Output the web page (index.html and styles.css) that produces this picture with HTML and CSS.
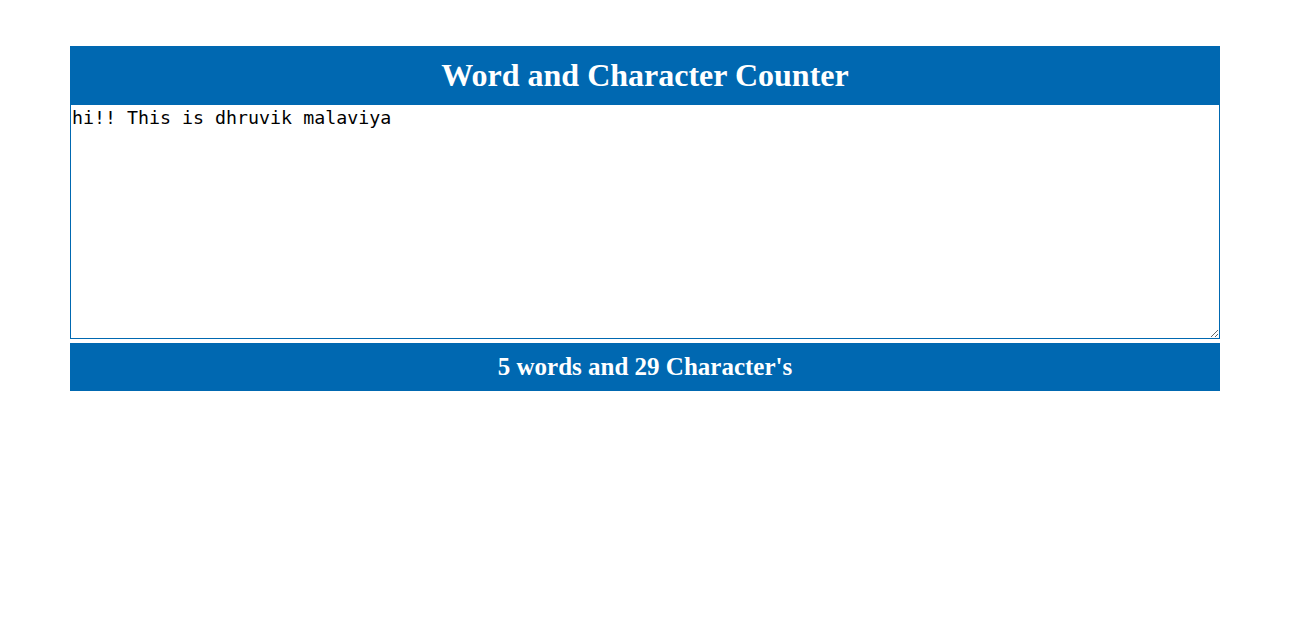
FILE: index.html
```html
<!DOCTYPE html>
<html>
<head>
<meta charset="utf-8">
<link rel="stylesheet" href="styles.css">
</head>
<body>
<div class="counter">
  <h1 class="title">Word and Character Counter</h1>
  <textarea class="input">hi!! This is dhruvik malaviya</textarea>
  <h2 class="result">5 words and 29 Character's</h2>
</div>
</body>
</html>
```
FILE: styles.css
```css
html, body {
  margin: 0;
  padding: 0;
  background: #fff;
}
.counter {
  width: 1150px;
  margin: 46px 0 0 70px;
  display: flex;
  flex-direction: column;
}
.title {
  margin: 0;
  height: 58px;
  background: #0068b1;
  color: #fff;
  font-family: "Liberation Serif", serif;
  font-weight: bold;
  font-size: 32px;
  display: flex;
  align-items: center;
  justify-content: center;
}
.input {
  box-sizing: border-box;
  width: 1150px;
  height: 235px;
  margin: 0;
  border: 1px solid #0068b1;
  padding: 2px 1px;
  font-family: "DejaVu Sans Mono", monospace;
  font-size: 18.3px;
  line-height: 22px;
  color: #000;
  outline: none;
}
.result {
  margin: 4px 0 0 0;
  height: 48px;
  background: #0068b1;
  color: #fff;
  font-family: "Liberation Serif", serif;
  font-weight: bold;
  font-size: 25px;
  display: flex;
  align-items: center;
  justify-content: center;
}
```
